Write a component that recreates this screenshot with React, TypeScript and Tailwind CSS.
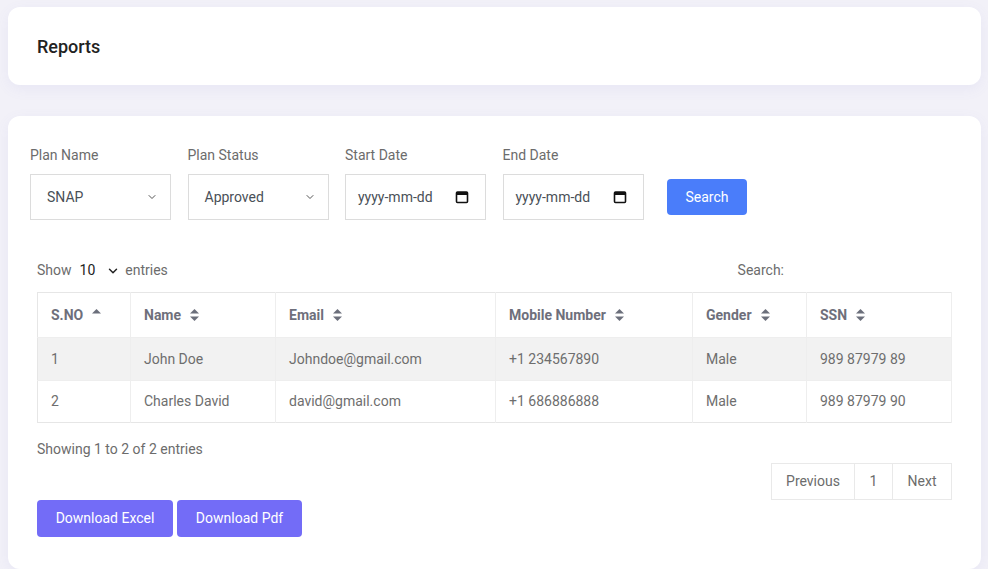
import { ChevronDown } from "lucide-react"

const rows = [
    { sno: "1", name: "John Doe", email: "Johndoe@gmail.com", mobile: "+1 234567890", gender: "Male", ssn: "989 87979 89" },
    { sno: "2", name: "Charles David", email: "david@gmail.com", mobile: "+1 686886888", gender: "Male", ssn: "989 87979 90" },
]

function SortIcon({ up }: { up?: boolean }) {
    return (
        <svg width="9" height="12" viewBox="0 0 9 12" className="ml-[9px] inline-block">
            <path d="M4.5 0 L9 4.6 L0 4.6 Z" fill="#6b6f7b" />
            {!up && <path d="M4.5 12 L9 7.4 L0 7.4 Z" fill="#6b6f7b" />}
        </svg>
    )
}

function CalendarIcon() {
    return (
        <svg width="14" height="14" viewBox="0 0 14 14" className="shrink-0">
            <rect x="1.5" y="2" width="11" height="10.5" rx="1" fill="none" stroke="#111" strokeWidth="1.6" />
            <rect x="1.5" y="2" width="11" height="3" fill="#111" />
        </svg>
    )
}

function FakeSelect({ value }: { value: string }) {
    return (
        <div className="flex h-[46px] w-[141px] items-center justify-between border border-[#dcdcdc] bg-white pl-4 pr-3 text-[14px] text-[#495057]">
            <span>{value}</span>
            <ChevronDown className="h-3 w-3 text-[#555]" strokeWidth={2} />
        </div>
    )
}

function FakeDate() {
    return (
        <div className="flex h-[46px] w-[141px] items-center justify-between border border-[#dcdcdc] bg-white pl-3 pr-4 text-[14px] text-[#495057]">
            <span>yyyy-mm-dd</span>
            <CalendarIcon />
        </div>
    )
}

export default function App() {
    const heads = [
        { label: "S.NO", w: "w-[93px]", up: true },
        { label: "Name", w: "w-[145px]" },
        { label: "Email", w: "w-[220px]" },
        { label: "Mobile Number", w: "w-[197px]" },
        { label: "Gender", w: "w-[114px]" },
        { label: "SSN", w: "" },
    ]
    return (
        <div className="min-h-[569px] bg-[#f2f1f8] pl-2 pr-[7px] pt-[7px] font-['Roboto',sans-serif]">
            <div className="flex h-[78px] items-center rounded-xl bg-white px-[29px] shadow-[0_4px_14px_rgba(120,110,200,0.08)]">
                <h1 className="text-[18px] font-medium text-[#222]">Reports</h1>
            </div>

            <div className="mt-[31px] rounded-xl bg-white px-[22px] pb-8 pt-[29px] shadow-[0_4px_14px_rgba(120,110,200,0.08)]">
                <div className="flex items-end gap-[16.5px]">
                    <div>
                        <div className="mb-[8px] text-[14px] text-[#6c6c6c]">Plan Name</div>
                        <FakeSelect value="SNAP" />
                    </div>
                    <div>
                        <div className="mb-[8px] text-[14px] text-[#6c6c6c]">Plan Status</div>
                        <FakeSelect value="Approved" />
                    </div>
                    <div>
                        <div className="mb-[8px] text-[14px] text-[#6c6c6c]">Start Date</div>
                        <FakeDate />
                    </div>
                    <div>
                        <div className="mb-[8px] text-[14px] text-[#6c6c6c]">End Date</div>
                        <FakeDate />
                    </div>
                    <button className="mb-[5px] ml-[7px] h-[36px] w-[80px] rounded bg-[#4a7dfa] text-[14px] text-white">
                        Search
                    </button>
                </div>

                <div className="px-[7px]">
                    <div className="mt-[40px] flex items-center justify-between pr-[168px] text-[14px] text-[#6c6c6c]">
                        <div className="flex items-center">
                            <span>Show</span>
                            <span className="ml-2 text-[#222]">10</span>
                            <ChevronDown className="ml-[11px] h-3.5 w-3.5 text-[#222]" strokeWidth={2.5} />
                            <span className="ml-[5px]">entries</span>
                        </div>
                        <span>Search:</span>
                    </div>

                    <table className="mt-[11px] w-full border-collapse border border-[#e6e6e6] text-left text-[14px]">
                        <thead>
                            <tr className="h-[45px]">
                                {heads.map((h) => (
                                    <th key={h.label} className={`${h.w} border-r border-[#eeeeee] px-[13px] font-bold text-[#6e6f7b]`}>
                                        <span className="inline-flex items-center">
                                            {h.label}
                                            <SortIcon up={h.up} />
                                        </span>
                                    </th>
                                ))}
                            </tr>
                        </thead>
                        <tbody className="text-[#6e6e6e]">
                            {rows.map((r, i) => (
                                <tr key={r.sno} className={`${i === 0 ? "h-[43px] bg-[#f2f2f2]" : "h-[42px] bg-white"}`}>
                                    {[r.sno, r.name, r.email, r.mobile, r.gender, r.ssn].map((v, j) => (
                                        <td key={j} className="border-r border-t border-[#eeeeee] px-[13px]">
                                            {v}
                                        </td>
                                    ))}
                                </tr>
                            ))}
                        </tbody>
                    </table>

                    <div className="mt-[16px] text-[14px] text-[#6c6c6c]">Showing 1 to 2 of 2 entries</div>

                    <div className="mt-[3px] flex justify-end">
                        <div className="flex h-[37px] border border-[#e9e9e9] text-[14px] text-[#6c6c6c]">
                            <span className="flex w-[83px] items-center justify-center border-r border-[#e9e9e9]">Previous</span>
                            <span className="flex w-[38px] items-center justify-center border-r border-[#e9e9e9]">1</span>
                            <span className="flex w-[58px] items-center justify-center">Next</span>
                        </div>
                    </div>

                    <div className="flex gap-[4px]">
                        <button className="h-[37px] w-[136px] rounded bg-[#736cf7] text-[14px] text-white">Download Excel</button>
                        <button className="h-[37px] w-[125px] rounded bg-[#736cf7] text-[14px] text-white">Download Pdf</button>
                    </div>
                </div>
            </div>
        </div>
    )
}
